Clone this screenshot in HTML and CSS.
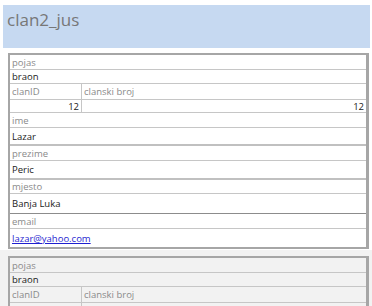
FILE: index.html
```html
<!DOCTYPE html>
<html lang="en">
  <head>
    <meta charset="UTF-8" />
    <meta name="viewport" content="width=device-width, initial-scale=1.0" />
    <title>clan2_jus</title>
    <link rel="stylesheet" href="styles.css">
  </head>
  <body>
    <header class="form-header">
      <h1 class="form-title">clan2_jus</h1>
    </header>

    <section class="record current">
      <div class="card">
        <div class="label">pojas</div>
        <div class="value h14">braon</div>
        <div class="pair">
          <div class="col-id">
            <div class="label h16">clanID</div>
            <div class="value num h13">12</div>
          </div>
          <div class="col-rest">
            <div class="label h16">clanski broj</div>
            <div class="value num h13">12</div>
          </div>
        </div>
        <div class="label">ime</div>
        <div class="value h18 thick">Lazar</div>
        <div class="label">prezime</div>
        <div class="value h19 thick">Peric</div>
        <div class="label h14">mjesto</div>
        <div class="value h20 dark">Banja Luka</div>
        <div class="label">email</div>
        <div class="value h18 last"><a href="#" class="link">lazar@yahoo.com</a></div>
      </div>
    </section>

    <section class="record">
      <div class="card">
        <div class="label">pojas</div>
        <div class="value h14">braon</div>
        <div class="pair">
          <div class="col-id">
            <div class="label h16">clanID</div>
            <div class="value num h13">12</div>
          </div>
          <div class="col-rest">
            <div class="label h16">clanski broj</div>
            <div class="value num h13">12</div>
          </div>
        </div>
      </div>
    </section>
  </body>
</html>
```

FILE: styles.css
```css
* {
  box-sizing: border-box;
}

body {
  margin: 0;
  font-family: "Open Sans", "DejaVu Sans", sans-serif;
  background: #ffffff;
  overflow: hidden;
}

.form-header {
  margin: 5px 2px 0 3px;
  height: 43px;
  background: #c6d9f1;
  padding: 5px 4px 0;
}

.form-title {
  margin: 0;
  font-size: 17px;
  line-height: 20px;
  font-weight: normal;
  color: #777777;
}

.record {
  padding: 5px 3px 1px 8px;
}

.record + .record {
  background: #f2f2f2;
  padding-top: 6px;
}

.card {
  border: 2px solid #a6a6a6;
  border-right-width: 3px;
  background: #ffffff;
}

.record + .record .card {
  background: #f2f2f2;
}

.label,
.value {
  display: flex;
  align-items: center;
  height: 15px;
  padding: 0 2px;
  font-size: 9.5px;
  border-bottom: 1px solid #c6c6c6;
  white-space: nowrap;
}

.label {
  color: #8a8a8a;
}

.value {
  color: #1a1a1a;
}

.num {
  justify-content: flex-end;
}

.h13 { height: 13px; }
.h14 { height: 14px; }
.h16 { height: 16px; }
.h18 { height: 18px; }
.h19 { height: 19px; }
.h20 { height: 20px; }

.thick {
  border-bottom: 2px solid #c0c0c0;
}

.dark {
  border-bottom: 1px solid #8c8c8c;
}

.last {
  border-bottom: none;
}

.pair {
  display: flex;
}

.col-id {
  width: 72px;
  border-right: 1px solid #c6c6c6;
}

.col-rest {
  flex: 1;
}

.link {
  color: #1f1fd0;
  text-decoration: underline;
}
```
